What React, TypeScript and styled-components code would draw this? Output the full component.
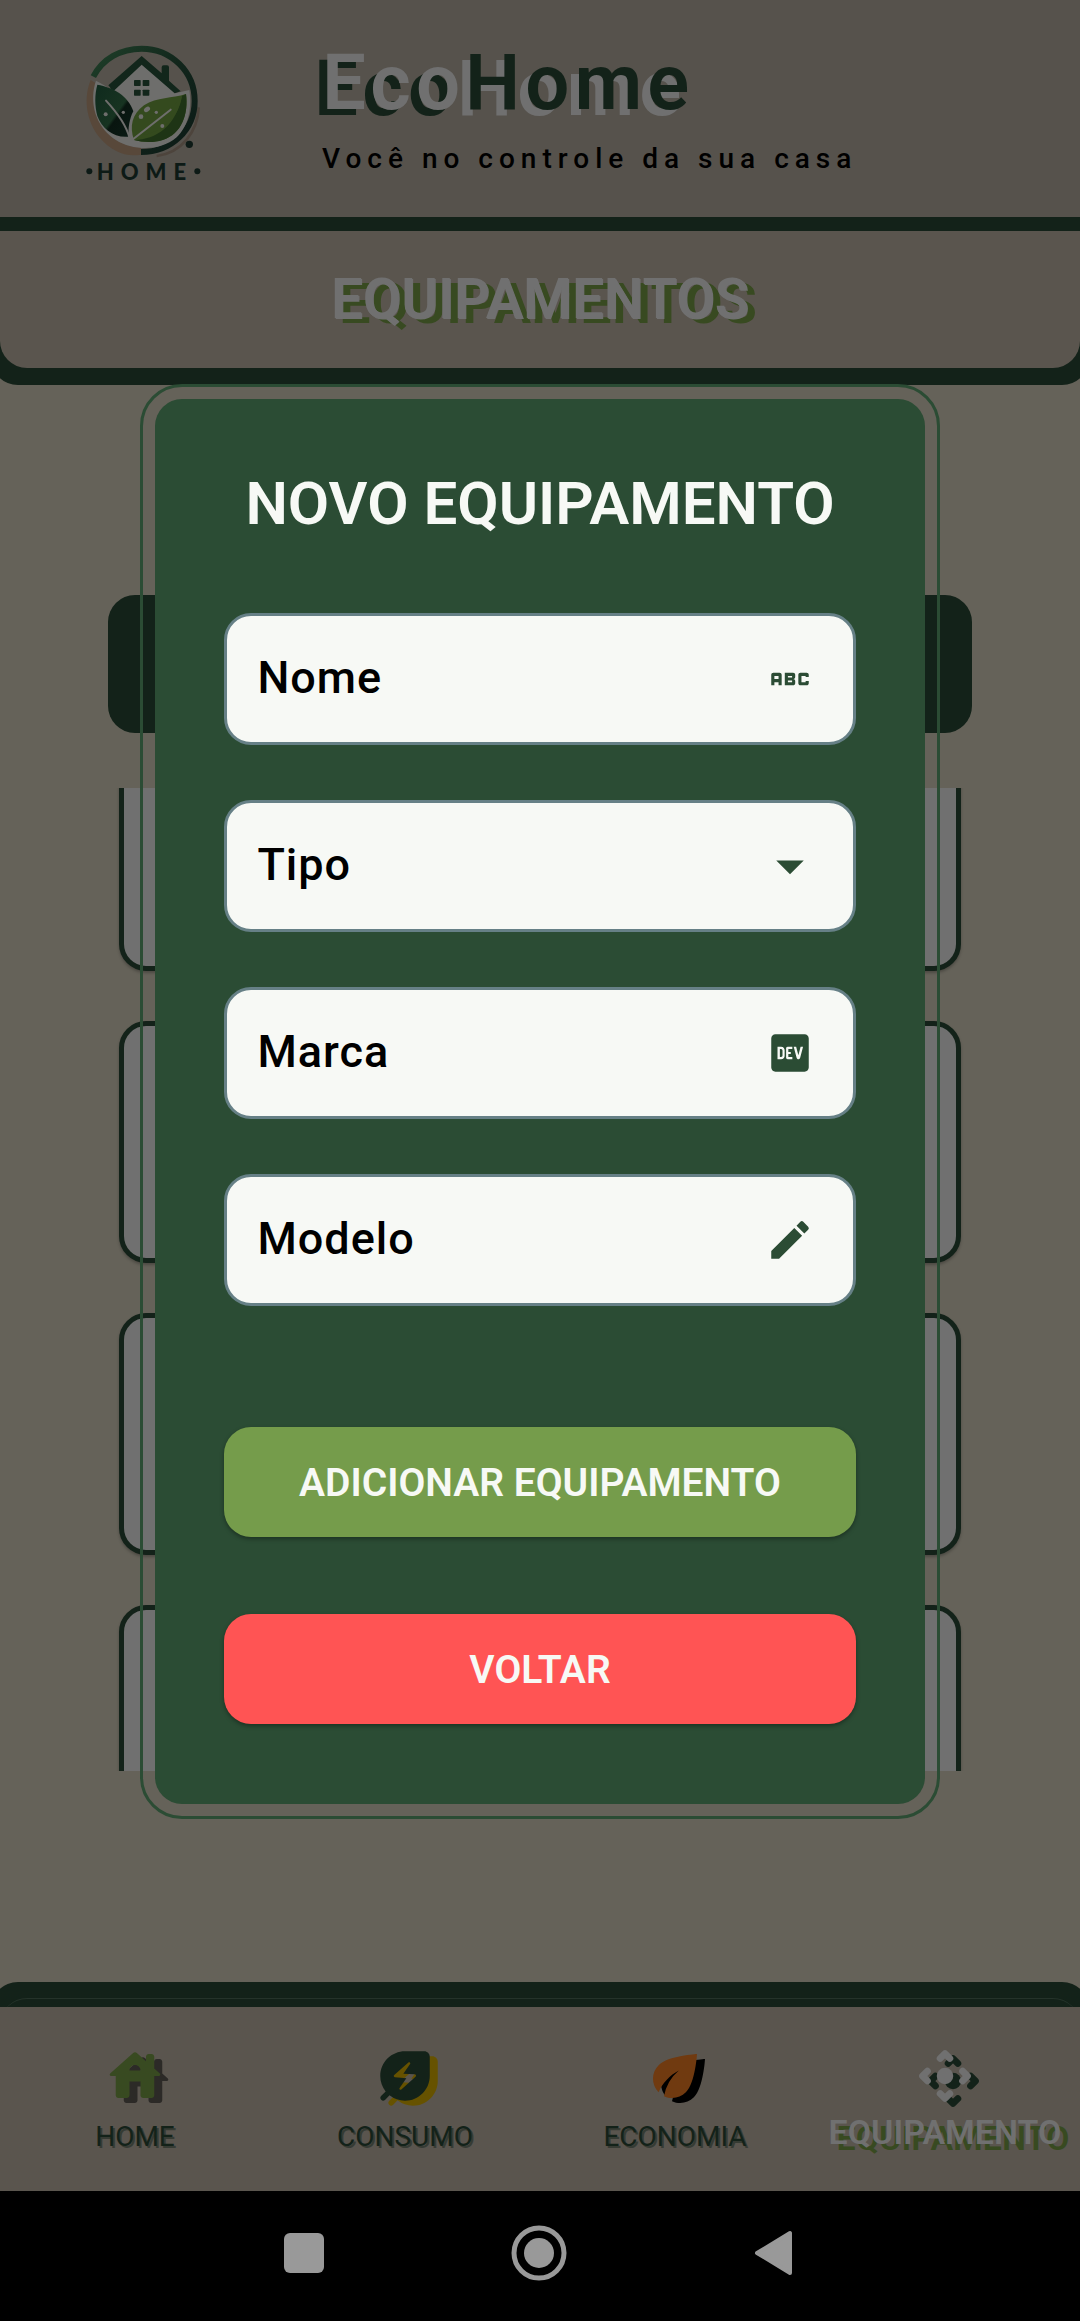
import React from "react";
import styled, { createGlobalStyle, css } from "styled-components";
import { MdAbc, MdArrowDropDown, MdEco, MdEdit, MdLogoDev } from "react-icons/md";

const color = {
  header: "#56524c",
  panel: "#5a554e",
  body: "#656259",
  dark: "#132219",
  line: "#25332a",
  grey: "#707070",
  moss: "#384a21",
  green: "#2b4c34",
  paper: "#f7f9f5",
  fieldBorder: "#668086",
  leaf: "#759c4b",
  red: "#ff5454",
  system: "#999999",
};

const GlobalStyle = createGlobalStyle`
  * { box-sizing: border-box; }
  body { margin: 0; background: ${color.body}; font-family: Roboto, "Liberation Sans", sans-serif; }
  button, input, select { font-family: inherit; }
`;

const Page = styled.div`
  position: relative;
  display: flex;
  flex-direction: column;
  height: 100vh;
  overflow: hidden;
  background: ${color.body};
`;

const Header = styled.header`
  display: flex;
  gap: 102px;
  height: 217px;
  padding: 30px 60px 0;
  background: ${color.header};
`;

const Brand = styled.div`
  display: flex;
  flex-direction: column;
`;

const BrandName = styled.h1`
  margin: 8px 0 0;
  font-size: 78px;
  line-height: 90px;
  font-weight: 600;
  letter-spacing: 5px;
`;

const BrandPart = styled.span<{ $ink: string; $shade: string }>`
  color: ${(p) => p.$ink};
  text-shadow: -8px 6px 0 ${(p) => p.$shade};
`;

const Tagline = styled.p`
  margin: 13px 0 0;
  font-size: 28px;
  line-height: 36px;
  font-weight: 500;
  letter-spacing: 6px;
  color: #000;
`;

const TitleFrame = styled.div`
  margin: 0 -9px;
  padding: 14px 9px 17px;
  background: ${color.dark};
  border-radius: 0 0 27px 27px;
`;

const TitlePanel = styled.div`
  display: flex;
  align-items: center;
  justify-content: center;
  height: 137px;
  background: ${color.panel};
  border-radius: 0 0 27px 27px;
`;

const ScreenTitle = styled.h2`
  margin: 0 0 2px;
  font-size: 56px;
  line-height: 66px;
  font-weight: 600;
  color: ${color.grey};
  text-shadow: 1px 1px 0 ${color.grey}, 8px 5px 0 ${color.moss};
`;

const Content = styled.main`
  display: flex;
  flex: 1;
  flex-direction: column;
  gap: 55px;
  min-height: 0;
  padding: 210px 10% 211px;
`;

const Toolbar = styled.div`
  height: 138px;
  flex-shrink: 0;
  border-radius: 27px;
  background: ${color.dark};
`;

const ListViewport = styled.div`
  flex: 1 1 0;
  min-height: 0;
  padding: 0 11px;
  overflow: hidden;
`;

const List = styled.div`
  display: flex;
  flex-direction: column;
  gap: 50px;
  margin-top: -59px;
`;

const Card = styled.article`
  height: 242px;
  border: 5px solid ${color.dark};
  border-radius: 27px;
  background: ${color.grey};
  box-shadow: 0 2px 3px rgba(0, 0, 0, 0.25);
`;

const TabFrame = styled.nav`
  margin: 0 -9px;
  padding: 16px 9px 0;
  background: ${color.dark};
  border-radius: 27px 27px 0 0;
`;

const TabLip = styled.div`
  padding-top: 8px;
  border-top: 1px solid ${color.line};
  border-radius: 27px 27px 0 0;
`;

const TabRow = styled.div`
  display: grid;
  grid-template-columns: repeat(4, 1fr);
  height: 184px;
  background: ${color.panel};
`;

const Tab = styled.a<{ $ink: string; $shade: string }>`
  display: flex;
  flex-direction: column;
  align-items: center;
  min-width: 0;
  padding-top: 36px;
  text-decoration: none;

  svg {
    flex-shrink: 0;
    width: 66px;
    height: 66px;
    color: ${(p) => p.$ink};
    filter: drop-shadow(8px 5px 0 ${(p) => p.$shade});
  }
`;

const TabLabel = styled.span<{ $active?: boolean }>`
  margin-top: 10px;
  font-size: 28px;
  line-height: 36px;
  font-weight: 400;
  white-space: nowrap;
  color: ${color.dark};
  text-shadow: 2px 2px 0 rgba(19, 34, 25, 0.5);

  ${(p) =>
    p.$active &&
    css`
      margin-top: 5px;
      font-size: 34px;
      font-weight: 600;
      color: ${color.grey};
      text-shadow: 8px 6px 0 ${color.moss};
    `}
`;

const SystemBar = styled.footer`
  display: flex;
  align-items: center;
  justify-content: center;
  gap: 175px;
  height: 130px;
  padding: 0 2px 6px 0;
  background: #000;
`;

const SystemButton = styled.button`
  width: 60px;
  height: 60px;
  padding: 0;
  border: 0;
  background: none;
  color: ${color.system};

  svg {
    display: block;
  }
`;

const Overlay = styled.div`
  position: absolute;
  inset: 0;
  display: flex;
  align-items: center;
  justify-content: center;
  padding: 11px 0 130px;
`;

const DialogOutline = styled.section`
  width: 74%;
  padding: 12px;
  border: 3px solid ${color.green};
  border-radius: 42px;
`;

const DialogForm = styled.form`
  display: flex;
  flex-direction: column;
  padding: 69px 69px 80px;
  border-radius: 27px;
  background: ${color.green};
`;

const DialogTitle = styled.h2`
  margin: 0 0 73px;
  font-size: 60px;
  line-height: 72px;
  font-weight: 600;
  text-align: center;
  white-space: nowrap;
  color: ${color.paper};
`;

const Fields = styled.div`
  display: flex;
  flex-direction: column;
  gap: 55px;
  margin-bottom: 121px;
`;

const Field = styled.label`
  display: flex;
  align-items: center;
  height: 132px;
  padding: 0 30px;
  border: 3px solid ${color.fieldBorder};
  border-radius: 27px;
  background: ${color.paper};
  color: ${color.green};
`;

const controlStyle = css`
  flex: 1;
  min-width: 0;
  height: 64px;
  padding: 0 0 2px;
  border: 0;
  outline: 0;
  background: none;
  font-size: 45px;
  line-height: 60px;
  font-weight: 500;
  letter-spacing: 1px;
  color: #000;
`;

const TextBox = styled.input`
  ${controlStyle}

  &::placeholder {
    color: #000;
    opacity: 1;
  }
`;

const Picker = styled.select`
  ${controlStyle}
  appearance: none;
`;

const FieldIcon = styled.span`
  display: flex;
  justify-content: center;
  width: 66px;
`;

const Actions = styled.div`
  display: flex;
  flex-direction: column;
  gap: 77px;
`;

const ActionButton = styled.button<{ $fill: string }>`
  height: 110px;
  padding: 2px 0 0;
  border: 0;
  border-radius: 27px;
  background: ${(p) => p.$fill};
  box-shadow: 0 2px 4px rgba(0, 0, 0, 0.35);
  font-size: 39px;
  line-height: 44px;
  font-weight: 600;
  color: ${color.paper};
`;

const Logo = () => (
  <svg width="160" height="170" viewBox="0 0 480 510" role="img" aria-label="Home">
    <defs>
      <linearGradient id="ring" x1="0" y1="0" x2="1" y2="1">
        <stop offset="0" stopColor="#1f3f29" />
        <stop offset="0.5" stopColor="#11251b" />
        <stop offset="1" stopColor="#0c1a16" />
      </linearGradient>
      <linearGradient id="leafDark" x1="0" y1="0" x2="1" y2="1">
        <stop offset="0" stopColor="#0f2a1d" />
        <stop offset="0.55" stopColor="#173321" />
        <stop offset="0.6" stopColor="#08150f" />
        <stop offset="1" stopColor="#0b1b15" />
      </linearGradient>
    </defs>
    <path d="M92 150C70 205 78 270 118 322C155 366 198 382 243 374L243 352C180 350 125 312 108 250C98 215 98 190 108 160Z" fill="#58483a" />
    <path d="M416 232C413 305 365 368 290 378" fill="none" stroke="#4d443c" strokeWidth="8" />
    <path d="M100 140C128 86 182 56 245 56C334 56 404 126 404 213C404 300 334 366 243 366" fill="none" stroke="url(#ring)" strokeWidth="18" />
    <path d="M155 182L245 98L345 190L388 180C396 230 388 285 350 322C320 348 282 356 245 354C180 351 126 312 106 250C96 215 98 180 108 152Q130 162 155 182Z" fill="#6e6e6c" />
    <path d="M155 182Q150 170 145 166L245 78L305 130V112Q305 106 311 106H321Q327 106 327 112V152L362 184L344 190L245 104L160 184Z" fill="#12261b" />
    <g fill="#12261b">
      <rect x="222" y="150" width="20" height="18" rx="2" />
      <rect x="248" y="150" width="20" height="18" rx="2" />
      <rect x="222" y="179" width="20" height="18" rx="2" />
      <rect x="248" y="179" width="20" height="18" rx="2" />
    </g>
    <path d="M112 164C160 172 206 198 220 244C208 266 204 296 206 320C160 324 126 296 112 258C104 226 104 194 112 164Z" fill="url(#leafDark)" />
    <path d="M378 192C386 250 366 312 308 330C276 340 246 336 222 330C208 290 216 252 252 226C292 200 336 206 378 192Z" fill="#344a1e" />
    <path d="M378 192C386 250 366 312 308 330C276 340 246 336 222 330C290 328 346 290 366 198Z" fill="#1e3415" />
    <path d="M366 198C356 262 310 306 246 316L330 240Z" fill="#344a1e" />
    <path d="M138 212C162 238 196 276 208 322" fill="none" stroke="#6e6e6c" strokeWidth="6" strokeLinecap="round" />
    <path d="M216 330L332 239" fill="none" stroke="#6e6e6c" strokeWidth="6" strokeLinecap="round" />
    <g fill="#6e6e6c">
      <circle cx="137" cy="253" r="6" />
      <circle cx="190" cy="247" r="5" />
      <ellipse cx="261" cy="238" rx="10" ry="7" transform="rotate(-35 261 238)" />
      <circle cx="243" cy="260" r="7" />
      <circle cx="289" cy="247" r="5" />
      <circle cx="307" cy="288" r="6" />
    </g>
    <g fill="#0d1a16">
      <circle cx="388" cy="343" r="11" />
      <circle cx="88" cy="424" r="9" />
      <circle cx="412" cy="424" r="9" />
      <text x="110" y="449" fontFamily="Lato, Roboto, sans-serif" fontWeight="900" fontSize="66" letterSpacing="21">
        HOME
      </text>
    </g>
  </svg>
);

const HouseIcon = () => (
  <svg viewBox="0 0 24 24" fill="currentColor" aria-hidden="true">
    <path d="M19 9.3V5c0-.55-.45-1-1-1h-1c-.55 0-1 .45-1 1v1.6l-3.33-3c-.38-.34-.96-.34-1.34 0l-8.36 7.53c-.34.31-.13.87.33.87H5v7c0 .55.45 1 1 1h3c.55 0 1-.45 1-1v-5h4v5c0 .55.45 1 1 1h3c.55 0 1-.45 1-1v-7h1.7c.46 0 .68-.57.33-.87L19 9.3zm-9 .7c0-1.1.9-2 2-2s2 .9 2 2h-4z" />
  </svg>
);

const EnergyLeafIcon = () => (
  <svg viewBox="0 0 24 24" fill="currentColor" aria-hidden="true">
    <path
      fillRule="evenodd"
      d="M12 3c-4.800 0-9 3.860-9 9 0 2.120.740 4.070 1.970 5.610L3.300 19.290a1 1 0 0 0 1.410 1.410l1.670-1.670A9 9 0 0 0 12 21c4.970 0 9-4.030 9-9V5c0-1.100-.900-2-2-2h-7zM15.830 12.260l-5.160 4.630c-.160.150-.410.150-.570.010-.150-.140-.180-.370-.060-.540l2.450-3.500-4.130-.390a.5.5 0 0 1-.280-.870l5.150-4.490c.160-.140.400-.140.560 0 .150.140.180.370.060.540l-2.450 3.500 4.150.240c.440.040.600.570.280.870z"
    />
  </svg>
);

const ControlIcon = () => (
  <svg viewBox="0 0 24 24" aria-hidden="true">
    <g fill="none" stroke="currentColor" strokeWidth="2.5" strokeLinecap="round" strokeLinejoin="round">
      <path d="M10.250 5.600L12 3.850L13.750 5.600" />
      <path d="M18.400 10.250L20.150 12L18.400 13.750" />
      <path d="M13.750 18.400L12 20.150L10.250 18.400" />
      <path d="M5.600 13.750L3.850 12L5.600 10.250" />
    </g>
    <circle cx="12" cy="12" r="3" fill="currentColor" />
  </svg>
);

export default function App() {
  return (
    <Page>
      <GlobalStyle />
      <Header>
        <Logo />
        <Brand>
          <BrandName>
            <BrandPart $ink={color.grey} $shade={color.dark}>Eco</BrandPart>
            <BrandPart $ink={color.dark} $shade={color.grey}>Home</BrandPart>
          </BrandName>
          <Tagline>Você no controle da sua casa</Tagline>
        </Brand>
      </Header>

      <TitleFrame>
        <TitlePanel>
          <ScreenTitle>EQUIPAMENTOS</ScreenTitle>
        </TitlePanel>
      </TitleFrame>

      <Content>
        <Toolbar />
        <ListViewport>
          <List>
            <Card />
            <Card />
            <Card />
            <Card />
          </List>
        </ListViewport>
      </Content>

      <TabFrame>
        <TabLip>
          <TabRow>
            <Tab href="#home" $ink={color.moss} $shade="#2c2a27">
              <HouseIcon />
              <TabLabel>HOME</TabLabel>
            </Tab>
            <Tab href="#consumo" $ink={color.dark} $shade="#665200">
              <EnergyLeafIcon />
              <TabLabel>CONSUMO</TabLabel>
            </Tab>
            <Tab href="#economia" $ink="#703a10" $shade="#000000">
              <MdEco />
              <TabLabel>ECONOMIA</TabLabel>
            </Tab>
            <Tab href="#equipamento" $ink={color.grey} $shade={color.dark}>
              <ControlIcon />
              <TabLabel $active>EQUIPAMENTO</TabLabel>
            </Tab>
          </TabRow>
        </TabLip>
      </TabFrame>

      <SystemBar>
        <SystemButton aria-label="Recentes">
          <svg width="60" height="60" viewBox="0 0 60 60" fill="currentColor">
            <rect x="10" y="10" width="40" height="40" rx="6" />
          </svg>
        </SystemButton>
        <SystemButton aria-label="Início">
          <svg width="60" height="60" viewBox="0 0 60 60" fill="currentColor">
            <circle cx="30" cy="30" r="25" fill="none" stroke="currentColor" strokeWidth="5" />
            <circle cx="30" cy="30" r="15" />
          </svg>
        </SystemButton>
        <SystemButton aria-label="Voltar">
          <svg width="60" height="60" viewBox="0 0 60 60" fill="currentColor" stroke="currentColor" strokeWidth="4" strokeLinejoin="round">
            <path d="M46 10V50L13 30Z" />
          </svg>
        </SystemButton>
      </SystemBar>

      <Overlay>
        <DialogOutline role="dialog" aria-labelledby="dialog-title">
          <DialogForm onSubmit={(event) => event.preventDefault()}>
            <DialogTitle id="dialog-title">NOVO EQUIPAMENTO</DialogTitle>
            <Fields>
              <Field>
                <TextBox placeholder="Nome" aria-label="Nome" />
                <FieldIcon><MdAbc size={50} /></FieldIcon>
              </Field>
              <Field>
                <Picker defaultValue="" aria-label="Tipo">
                  <option value="">Tipo</option>
                </Picker>
                <FieldIcon><MdArrowDropDown size={66} /></FieldIcon>
              </Field>
              <Field>
                <TextBox placeholder="Marca" aria-label="Marca" />
                <FieldIcon><MdLogoDev size={50} /></FieldIcon>
              </Field>
              <Field>
                <TextBox placeholder="Modelo" aria-label="Modelo" />
                <FieldIcon><MdEdit size={50} /></FieldIcon>
              </Field>
            </Fields>
            <Actions>
              <ActionButton type="submit" $fill={color.leaf}>ADICIONAR EQUIPAMENTO</ActionButton>
              <ActionButton type="button" $fill={color.red}>VOLTAR</ActionButton>
            </Actions>
          </DialogForm>
        </DialogOutline>
      </Overlay>
    </Page>
  );
}
